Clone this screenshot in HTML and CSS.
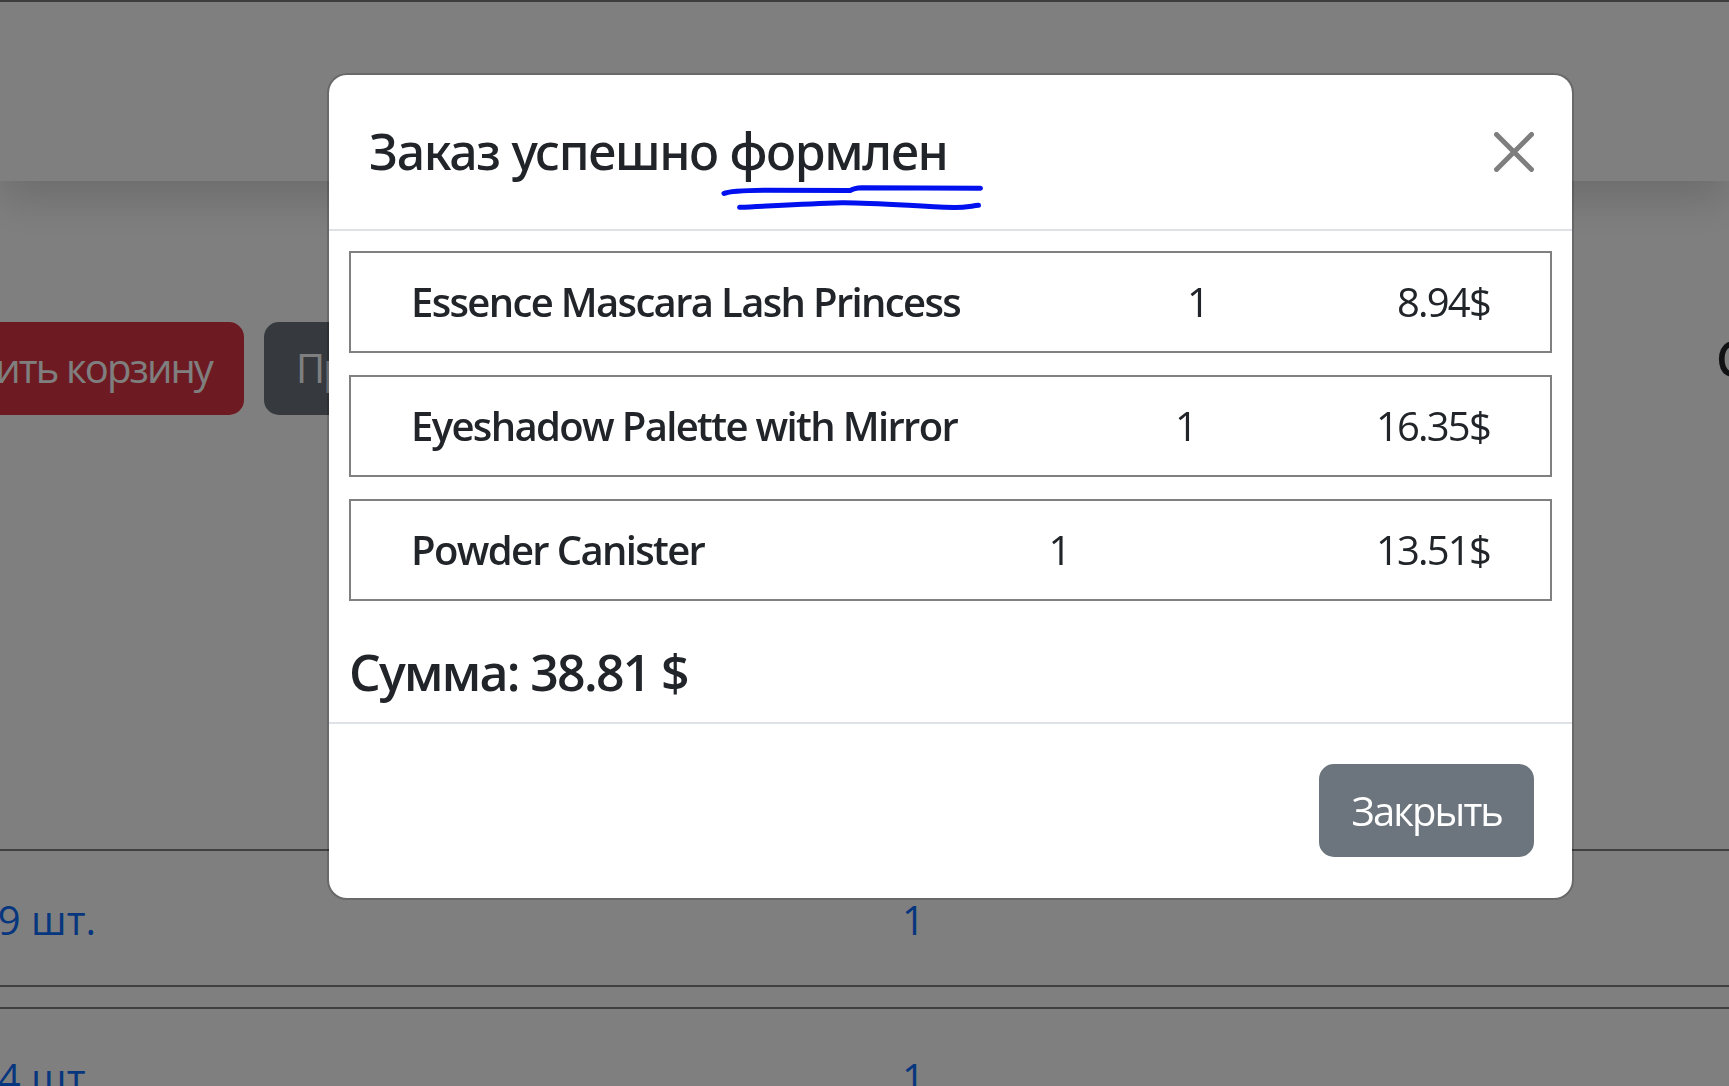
FILE: index.html
```html
<!DOCTYPE html>
<html lang="ru">
<head>
<meta charset="utf-8">
<title>Корзина</title>
<link rel="stylesheet" href="styles.css">
</head>
<body>
<div class="page">
  <nav class="navbar"></nav>
  <div class="toolbar">
    <div class="toolbar-left"><button class="btn btn-danger">Очистить корзину</button></div>
    <button class="btn btn-secondary">Продолжить покупки</button>
    <div class="toolbar-right"><h5 class="cart-sum">Сумма: 38.81 $</h5></div>
  </div>
  <div class="cart-list">
    <div class="cart-row"><span class="stock">В наличии: 99 шт.</span><span class="count">1</span></div>
    <div class="cart-row"><span class="stock">В наличии: 84 шт.</span><span class="count">1</span></div>
  </div>
</div>
<div class="backdrop"></div>
<div class="modal" role="dialog">
  <div class="modal-header">
    <h5 class="modal-title">Заказ успешно формлен</h5>
    <button class="btn-close" aria-label="Закрыть"><svg viewBox="0 0 16 16"><path d="M.293.293a1 1 0 0 1 1.414 0L8 6.586 14.293.293a1 1 0 1 1 1.414 1.414L9.414 8l6.293 6.293a1 1 0 0 1-1.414 1.414L8 9.414l-6.293 6.293a1 1 0 0 1-1.414-1.414L6.586 8 .293 1.707a1 1 0 0 1 0-1.414z"/></svg></button>
  </div>
  <div class="modal-body">
    <div class="order-item"><span class="item-name">Essence Mascara Lash Princess</span><span class="item-qty">1</span><span class="item-price">8.94$</span></div>
    <div class="order-item"><span class="item-name">Eyeshadow Palette with Mirror</span><span class="item-qty">1</span><span class="item-price">16.35$</span></div>
    <div class="order-item"><span class="item-name">Powder Canister</span><span class="item-qty">1</span><span class="item-price">13.51$</span></div>
    <h5 class="order-sum">Сумма: 38.81 $</h5>
  </div>
  <div class="modal-footer">
    <button class="btn btn-secondary">Закрыть</button>
  </div>
  <svg class="scribble" viewBox="0 0 620 50">
    <path d="M344 23.5 Q350 20.5 386 20.2 L470 20.6 Q474 18 482 17.8 L600.5 18.3"/>
    <path d="M359.6 37.3 C390 36 420 34 462 32.7 C490 32.5 520 35 574 37.6 C585 37.8 592 35.8 598.5 35.3"/>
  </svg>
</div>
</body>
</html>
```
FILE: styles.css
```css
* { box-sizing: border-box; }
html, body { margin: 0; height: 100%; }
body {
  overflow: hidden;
  font-family: "Open Sans", "Noto Sans", sans-serif;
  font-size: 40px;
  line-height: 1.5;
  color: #212529;
  background: #fff;
}
h5 { margin: 0; }

.navbar {
  position: relative;
  height: 181px;
  background: #fff;
  border-top: 2px solid #7a7a7a;
  box-shadow: 0 20px 40px rgba(0, 0, 0, .15);
}

.toolbar {
  display: flex;
  align-items: center;
  gap: 20px;
  margin-top: 140.7px;
}
.toolbar-left {
  flex: 0 0 244px;
  min-width: 0;
  display: flex;
  justify-content: flex-end;
}
.toolbar-left .btn { flex: none; }
.toolbar > .btn-secondary { flex: none; }
.toolbar-right {
  flex: 0 0 13px;
  min-width: 0;
  margin-left: auto;
  white-space: nowrap;
}
.cart-sum {
  margin-bottom: 20px;
  font-family: "Noto Sans", "Open Sans", sans-serif;
  font-size: 50px;
  font-weight: 500;
  line-height: 1.2;
  letter-spacing: -1.2px;
}

.btn {
  font-family: inherit;
  font-size: 40px;
  line-height: 60px;
  padding: 14.5px 30px;
  border: 2px solid transparent;
  border-radius: 15px;
  color: #fff;
  white-space: nowrap;
  letter-spacing: -1.9px;
}
.btn-danger { background: #dc3545; border-color: #dc3545; }
.btn-secondary { background: #6c757d; border-color: #6c757d; }

.cart-list { margin-top: 434px; }
.cart-row {
  display: grid;
  grid-template-columns: 502px 806px auto;
  margin-left: -406px;
  margin-bottom: 20px;
  padding: 39px 0 35px;
  border-top: 2px solid #808080;
  border-bottom: 2px solid #808080;
  color: #0d6efd;
}
.stock { text-align: right; }
.count { grid-column: 3; }

.backdrop {
  position: fixed;
  inset: 0;
  z-index: 10;
  background: rgba(0, 0, 0, .5);
}

.modal {
  position: fixed;
  z-index: 11;
  left: 327px;
  top: 72.7px;
  width: 1247px;
  background: #fff;
  background-clip: padding-box;
  border: 2px solid rgba(0, 0, 0, .175);
  border-radius: 20px;
}
.modal-header {
  display: flex;
  align-items: center;
  justify-content: space-between;
  padding: 39.5px 38px 39.5px 40px;
  border-bottom: 2px solid #dee2e6;
}
.modal-title {
  font-family: "Noto Sans", "Open Sans", sans-serif;
  font-size: 50px;
  font-weight: 500;
  line-height: 75px;
  letter-spacing: -1.35px;
}
.btn-close {
  display: flex;
  width: 40px;
  height: 40px;
  padding: 0;
  border: 0;
  background: none;
  color: #000;
  opacity: .5;
}
.btn-close svg { width: 40px; height: 40px; fill: currentColor; display: block; }

.modal-body { padding: 20px; }
.order-item {
  display: flex;
  align-items: center;
  justify-content: space-between;
  padding: 19px 60px;
  margin-bottom: 22px;
  border: 2px solid #808080;
}
.item-name { font-weight: 600; letter-spacing: -1.65px; margin-right: 38px; }
.item-qty, .item-price { font-weight: 400; letter-spacing: -1.8px; }
.order-sum {
  margin-top: 41.6px;
  font-size: 50px;
  font-weight: 600;
  line-height: 60px;
  letter-spacing: -1.7px;
}

.modal-footer {
  display: flex;
  justify-content: flex-end;
  padding: 40px 38px 41px;
  border-top: 2px solid #dee2e6;
}

.scribble {
  position: absolute;
  left: 51px;
  top: 95.3px;
  width: 620px;
  height: 50px;
  fill: none;
  stroke: #0010ee;
  stroke-width: 5;
  stroke-linecap: round;
  stroke-linejoin: round;
  pointer-events: none;
}
```
